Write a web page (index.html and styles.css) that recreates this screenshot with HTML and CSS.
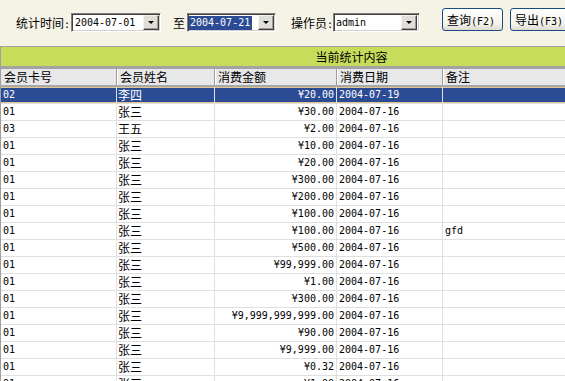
FILE: index.html
```html
<!DOCTYPE html>
<html lang="zh-CN">
<head>
    <meta charset="UTF-8">
    <title>消费统计</title>
    <link rel="stylesheet" href="styles.css">
</head>
<body>
    <div class="toolbar">
        <span class="lbl l1">统计时间<span class="m">:</span></span>
        <div class="combo c1"><span class="val m">2004-07-01</span><span class="drop"></span></div>
        <span class="lbl to">至</span>
        <div class="combo c2"><span class="val m sel">2004-07-21</span><span class="drop"></span></div>
        <span class="lbl op">操作员<span class="m">:</span></span>
        <div class="combo c3"><span class="val m">admin</span><span class="drop"></span></div>
        <div class="btn b1">查询<span class="m">(F2)</span></div>
        <div class="btn b2">导出<span class="m">(F3)</span></div>
    </div>

    <div class="grid">
        <div class="title">当前统计内容</div>
        <div class="head">
            <div class="c c1">会员卡号</div>
            <div class="c c2">会员姓名</div>
            <div class="c c3">消费金额</div>
            <div class="c c4">消费日期</div>
            <div class="c c5">备注</div>
        </div>
        <div id="rows"></div>
    </div>

    <script>
        // rows of the grid
        var data = [
            ["02", "李四", "¥20.00", "2004-07-19", ""],
            ["01", "张三", "¥30.00", "2004-07-16", ""],
            ["03", "王五", "¥2.00", "2004-07-16", ""],
            ["01", "张三", "¥10.00", "2004-07-16", ""],
            ["01", "张三", "¥20.00", "2004-07-16", ""],
            ["01", "张三", "¥300.00", "2004-07-16", ""],
            ["01", "张三", "¥200.00", "2004-07-16", ""],
            ["01", "张三", "¥100.00", "2004-07-16", ""],
            ["01", "张三", "¥100.00", "2004-07-16", "gfd"],
            ["01", "张三", "¥500.00", "2004-07-16", ""],
            ["01", "张三", "¥99,999.00", "2004-07-16", ""],
            ["01", "张三", "¥1.00", "2004-07-16", ""],
            ["01", "张三", "¥300.00", "2004-07-16", ""],
            ["01", "张三", "¥9,999,999,999.00", "2004-07-16", ""],
            ["01", "张三", "¥90.00", "2004-07-16", ""],
            ["01", "张三", "¥9,999.00", "2004-07-16", ""],
            ["01", "张三", "¥0.32", "2004-07-16", ""],
            ["01", "张三", "¥1.00", "2004-07-16", ""]
        ];
        var box = document.getElementById("rows");
        for (var i = 0; i < data.length; i++) {
            var row = document.createElement("div");
            row.className = i == 0 ? "row on" : "row";
            for (var j = 0; j < 5; j++) {
                var cell = document.createElement("div");
                cell.className = "c c" + (j + 1) + (j == 1 ? "" : " m");
                cell.textContent = data[i][j];
                row.appendChild(cell);
            }
            box.appendChild(row);
        }
    </script>
</body>
</html>
```

FILE: styles.css
```css
body{
    margin: 0;
    background: #f5f3e6;
    font-family: "Noto Sans CJK SC", sans-serif;
    font-size: 12px;
    color: #000;
    overflow: hidden;
}
.m{
    font-family: "DejaVu Sans Mono", monospace;
    font-size: 10px;
}
/* toolbar */
.toolbar{
    display: flex;
    align-items: flex-start;
    height: 46px;
    padding-left: 16px;
    width: 700px;
}
.toolbar>*{
    flex-shrink: 0;
}
.lbl{
    margin-top: 13px;
    line-height: 19px;
    white-space: nowrap;
}
.lbl.l1{
    width: 54px;
}
.lbl.to{
    margin-left: 12px;
    width: 12px;
}
.lbl.op{
    margin-left: 15px;
    width: 42px;
}
.combo{
    display: flex;
    align-items: center;
    box-sizing: border-box;
    margin-top: 13px;
    height: 19px;
    background: #fff;
    border: 1px solid;
    border-color: #808080 #fff #fff #808080;
    box-shadow: inset 1px 1px 0 #404040, inset -1px -1px 0 #d4d0c8;
    padding: 1px;
}
.combo.c1{
    margin-left: 1px;
    width: 90px;
}
.combo.c2{
    margin-left: 2px;
    width: 89px;
}
.combo.c3{
    width: 87px;
}
.val{
    line-height: 14px;
    padding-left: 1px;
}
.val.sel{
    background: #2b4b94;
    color: #fff;
    padding: 0 2px 0 1px;
}
.drop{
    margin-left: auto;
    position: relative;
    box-sizing: border-box;
    width: 16px;
    height: 15px;
    background: #e0ded8;
    border: 1px solid;
    border-color: #f4f3ee #404040 #404040 #f4f3ee;
    box-shadow: inset -1px -1px 0 #9d9b94;
}
.drop::after{
    content: "";
    position: absolute;
    left: 4px;
    top: 5px;
    border-left: 3px solid transparent;
    border-right: 3px solid transparent;
    border-top: 3px solid #000;
}
.btn{
    box-sizing: border-box;
    margin-top: 8px;
    height: 23px;
    line-height: 21px;
    padding-left: 4px;
    border: 1px solid #1c4a85;
    border-radius: 3px;
    background: linear-gradient(#ffffff, #f3f2ec 70%, #dedcd3);
    white-space: nowrap;
}
.btn.b1{
    margin-left: 22px;
    width: 61px;
}
.btn.b2{
    margin-left: 7px;
    width: 60px;
}
/* grid */
.grid{
    width: 701px;
    border-left: 1px solid #a0a0a0;
}
.title{
    height: 19px;
    line-height: 19px;
    background: #c8dc5c;
    border-top: 1px solid #a0a0a0;
    border-bottom: 3px solid #a3a3a3;
    text-align: center;
}
.head,.row{
    display: flex;
    height: 16px;
    line-height: 16px;
}
.head{
    background: #e8e8e8;
    border-bottom: 2px solid #a8a8a8;
}
.row{
    background: #fff;
    border-bottom: 1px solid #e0e0e0;
}
.row.on{
    background: #2b4b94;
    color: #fff;
    box-shadow: inset 0 1px 0 #e2c58c, inset 0 -1px 0 #e2c58c;
}
.c{
    box-sizing: border-box;
    flex-shrink: 0;
    white-space: nowrap;
    overflow: hidden;
    border-right: 1px solid #e0e0e0;
}
.head .c{
    border-right: 1px solid #9c9c9c;
    box-shadow: 1px 0 0 #fff;
    padding-left: 3px;
}
.c1{
    width: 116px;
    padding-left: 2px;
}
.c2{
    width: 98px;
    padding-left: 1px;
}
.c3{
    width: 122px;
    text-align: right;
    padding-right: 2px;
}
.head .c3{
    text-align: left;
}
.c4{
    width: 106px;
    padding-left: 2px;
}
.c5{
    flex: 1;
    padding-left: 2px;
    border-right: none;
}
```
